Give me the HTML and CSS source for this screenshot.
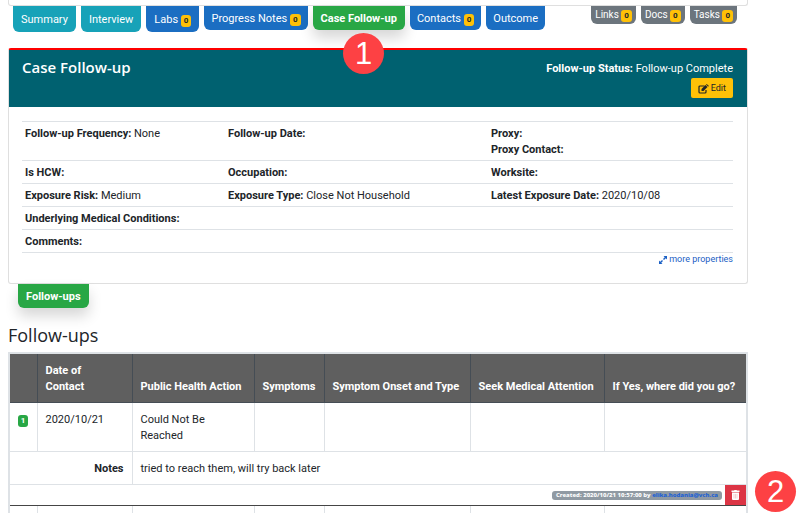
FILE: index.html
```html
<!DOCTYPE html>
<html lang="en">
<head>
  <meta charset="UTF-8">
  <meta name="viewport" content="width=device-width, initial-scale=1.0">
  <title>Case Follow-up</title>
  <link rel="stylesheet" href="styles.css">
</head>
<body>
  <div class="page">
    <div class="top-panel"></div>

    <nav class="tabs">
      <a href="#" class="tab tab-info">Summary</a>
      <a href="#" class="tab tab-info">Interview</a>
      <a href="#" class="tab tab-primary tab-tall">Labs <span class="count">0</span></a>
      <a href="#" class="tab tab-primary">Progress Notes <span class="count">0</span></a>
      <a href="#" class="tab tab-active">Case Follow-up</a>
      <a href="#" class="tab tab-primary">Contacts <span class="count">0</span></a>
      <a href="#" class="tab tab-primary">Outcome</a>
      <div class="side-tabs">
        <a href="#" class="tab tab-small">Links <span class="count">0</span></a>
        <a href="#" class="tab tab-small">Docs <span class="count">0</span></a>
        <a href="#" class="tab tab-small">Tasks <span class="count">0</span></a>
      </div>
    </nav>

    <section class="card">
      <div class="card-header">
        <h1>Case Follow-up</h1>
        <div class="status">
          <div><b>Follow-up Status:</b> Follow-up Complete</div>
          <button type="button" class="btn-edit">
            <svg width="11" height="10" viewBox="0 0 22 20" aria-hidden="true">
              <path d="M13 4H4Q2 4 2 6V16Q2 18 4 18H14Q16 18 16 16V12" fill="none" stroke="#212529" stroke-width="2.4"/>
              <path d="M7 14V10L15 2L19 6L11 14ZM16 1L17 0Q18 0 21 3Q22 4 21 5L20 5Z" fill="#212529"/>
            </svg>
            Edit
          </button>
        </div>
      </div>
      <div class="card-body">
        <table class="properties">
          <colgroup>
            <col class="prop-a"><col class="prop-b"><col class="prop-c">
          </colgroup>
          <tr>
            <td><b>Follow-up Frequency:</b> None</td>
            <td><b>Follow-up Date:</b></td>
            <td><b>Proxy:</b><br><b>Proxy Contact:</b></td>
          </tr>
          <tr>
            <td><b>Is HCW:</b></td>
            <td><b>Occupation:</b></td>
            <td><b>Worksite:</b></td>
          </tr>
          <tr>
            <td><b>Exposure Risk:</b> Medium</td>
            <td><b>Exposure Type:</b> Close Not Household</td>
            <td><b>Latest Exposure Date:</b> 2020/10/08</td>
          </tr>
          <tr>
            <td colspan="3"><b>Underlying Medical Conditions:</b></td>
          </tr>
          <tr>
            <td colspan="3"><b>Comments:</b></td>
          </tr>
        </table>
        <a href="#" class="more">
          <svg width="8" height="8" viewBox="0 0 16 16" aria-hidden="true">
            <path d="M9 0H16V7L13.500 4.500L10 8L8 6L11.500 2.500ZM7 16H0V9L2.500 11.500L6 8L8 10L4.500 13.500Z" fill="#1b60c5"/>
          </svg>
          more properties
        </a>
      </div>
    </section>

    <nav class="sub-tabs">
      <a href="#" class="tab tab-active">Follow-ups</a>
    </nav>

    <h2>Follow-ups</h2>
    <table class="followups">
      <colgroup>
        <col class="col-num"><col class="col-date"><col class="col-action"><col class="col-symptoms">
        <col class="col-onset"><col class="col-attention"><col>
      </colgroup>
      <thead>
        <tr>
          <th></th>
          <th>Date of<br>Contact</th>
          <th>Public Health Action</th>
          <th>Symptoms</th>
          <th>Symptom Onset and Type</th>
          <th>Seek Medical Attention</th>
          <th>If Yes, where did you go?</th>
        </tr>
      </thead>
      <tbody>
        <tr>
          <td><span class="num">1</span></td>
          <td>2020/10/21</td>
          <td>Could Not Be<br>Reached</td>
          <td></td>
          <td></td>
          <td></td>
          <td></td>
        </tr>
        <tr>
          <th colspan="2" scope="row" class="notes">Notes</th>
          <td colspan="5">tried to reach them, will try back later</td>
        </tr>
        <tr class="meta-row">
          <td colspan="7">
            <div class="meta">
              <span class="created">Created: 2020/10/21 10:57:00 by <a href="#">elika.hodania@vch.ca</a></span>
              <button type="button" class="btn-delete" aria-label="Delete">
                <svg width="9" height="10" viewBox="0 0 18 20" aria-hidden="true">
                  <path d="M1 1H6L7 0H11L12 1H17V4H1Z" fill="#fff"/>
                  <path d="M2 5H16V18Q16 20 14 20H4Q2 20 2 18Z" fill="#fff"/>
                  <path d="M6 8V17M9 8V17M12 8V17" stroke="#eba0a7" stroke-width="1"/>
                </svg>
              </button>
            </div>
          </td>
        </tr>
        <tr>
          <td></td>
          <td></td>
          <td></td>
          <td></td>
          <td></td>
          <td></td>
          <td></td>
        </tr>
      </tbody>
    </table>

    <span class="marker marker-one">1</span>
    <span class="marker marker-two">2</span>
  </div>
</body>
</html>
```

FILE: styles.css
```css
* {
  box-sizing: border-box;
}
body {
  margin: 0;
  height: 100vh;
  overflow: hidden;
  background: #fff;
  color: #212529;
  font-family: Roboto, "Noto Sans", sans-serif;
  font-size: 11px;
  line-height: 16px;
}
.page {
  position: relative;
  padding: 0 49px 0 8px;
}
b, th {
  font-weight: 700;
}
a {
  text-decoration: none;
}
.top-panel {
  height: 6px;
  border: 1px solid #dfdfdf;
  border-top: 0;
  border-radius: 0 0 3px 3px;
}

/* tabs */
.tabs {
  display: flex;
  align-items: flex-start;
  gap: 5px;
  height: 42px;
  padding: 0 11px 0 5px;
}
.tab {
  padding: 5px 8px 3px;
  border-radius: 0 0 6px 6px;
  color: #fff;
  white-space: nowrap;
}
.tab-info {
  padding: 6px 8px 4px;
  background: #17a2b8;
}
.tab-primary {
  padding: 5px 7px 3px;
  background: #1b6ec2;
}
.tab-tall {
  padding: 6px 8px 4px;
}
.tab-active {
  background: #28a745;
  font-weight: 700;
  box-shadow: 0 8px 14px rgba(0, 0, 0, 0.16);
}
.side-tabs {
  display: flex;
  gap: 5px;
  margin-left: auto;
}
.tab-small {
  padding: 1px 4px;
  background: #6c757d;
  font-size: 10px;
}
.count {
  display: inline-block;
  padding: 0 3px;
  border-radius: 3px;
  background: #ffc107;
  color: #212529;
  font-size: 8px;
  font-weight: 700;
  line-height: 12px;
}

/* case card */
.card {
  border: 1px solid #dfdfdf;
  border-top: 2px solid #f00;
  border-radius: 3px;
}
.card-header {
  display: flex;
  justify-content: space-between;
  padding: 10px 14px 9px 13px;
  background: #006170;
  color: #fff;
}
h1 {
  margin: 0;
  font-family: "Open Sans", "Noto Sans", sans-serif;
  font-size: 15px;
  font-weight: 600;
  line-height: 14px;
}
.status {
  padding-top: 1px;
  text-align: right;
}
.btn-edit {
  height: 20px;
  margin-top: 1px;
  padding: 0 7px;
  border: 0;
  border-radius: 2px;
  background: #ffc107;
  color: #212529;
  font: inherit;
  font-size: 9px;
}
.btn-edit svg {
  vertical-align: middle;
}
.card-body {
  padding: 14px 14px 18px 13px;
}
.properties {
  width: 100%;
  table-layout: fixed;
  border-collapse: collapse;
  border-bottom: 1px solid #dee2e6;
}
.properties td {
  padding: 4px 3px 2px;
  border-top: 1px solid #dee2e6;
  vertical-align: top;
}
.prop-a {
  width: 203px;
}
.prop-b {
  width: 263px;
}
.more {
  display: block;
  color: #1b60c5;
  font-size: 9px;
  line-height: 12px;
  text-align: right;
}
.more svg {
  vertical-align: middle;
}

/* follow-ups */
.sub-tabs {
  display: flex;
  padding-left: 10px;
}
h2 {
  margin: 15px 0 5px;
  font-family: "Open Sans", "Noto Sans", sans-serif;
  font-size: 18px;
  font-weight: 500;
  line-height: 24px;
}
.followups {
  width: 100%;
  table-layout: fixed;
  border-collapse: collapse;
  border: 2px solid #dee2e6;
}
.followups td,
.followups th {
  padding: 9px 8px 7px;
  border: 1px solid #dee2e6;
  text-align: left;
  vertical-align: top;
}
.followups thead th {
  padding: 9px 0 7px 8px;
  border-color: #454d55;
  background: #5f5f5f;
  color: #fff;
  vertical-align: bottom;
}
.followups .notes {
  text-align: right;
}
.col-num {
  width: 28px;
}
.col-date {
  width: 95px;
}
.col-action {
  width: 122px;
}
.col-symptoms {
  width: 70px;
}
.col-onset {
  width: 146px;
}
.col-attention {
  width: 134px;
}
.num {
  display: inline-block;
  width: 10px;
  border-radius: 3px;
  background: #28a745;
  color: #fff;
  font-size: 8px;
  font-weight: 700;
  line-height: 12px;
  text-align: center;
}
.followups .meta-row td {
  padding: 0;
  border-bottom: 1px solid #454545;
}
.meta {
  display: flex;
  justify-content: flex-end;
  align-items: center;
  gap: 3px;
}
.created {
  padding: 0 4px;
  border-radius: 3px;
  background: #909aa3;
  color: #fff;
  font-family: "Noto Sans", sans-serif;
  font-size: 6px;
  font-weight: 800;
  line-height: 9px;
}
.created a {
  color: #1b60d5;
}
.btn-delete {
  display: flex;
  align-items: center;
  justify-content: center;
  width: 21px;
  height: 20px;
  padding: 0;
  border: 0;
  background: #dc3545;
}

/* numbered callouts laid over the screen */
.marker {
  position: absolute;
  width: 41px;
  height: 41px;
  border-radius: 50%;
  background: #fd4144;
  color: #fff;
  font-family: "Liberation Sans", Arial, sans-serif;
  font-size: 31px;
  line-height: 41px;
  text-align: center;
}
.marker-one {
  top: 33px;
  left: 343px;
}
.marker-two {
  top: 471px;
  right: 1px;
}
```
